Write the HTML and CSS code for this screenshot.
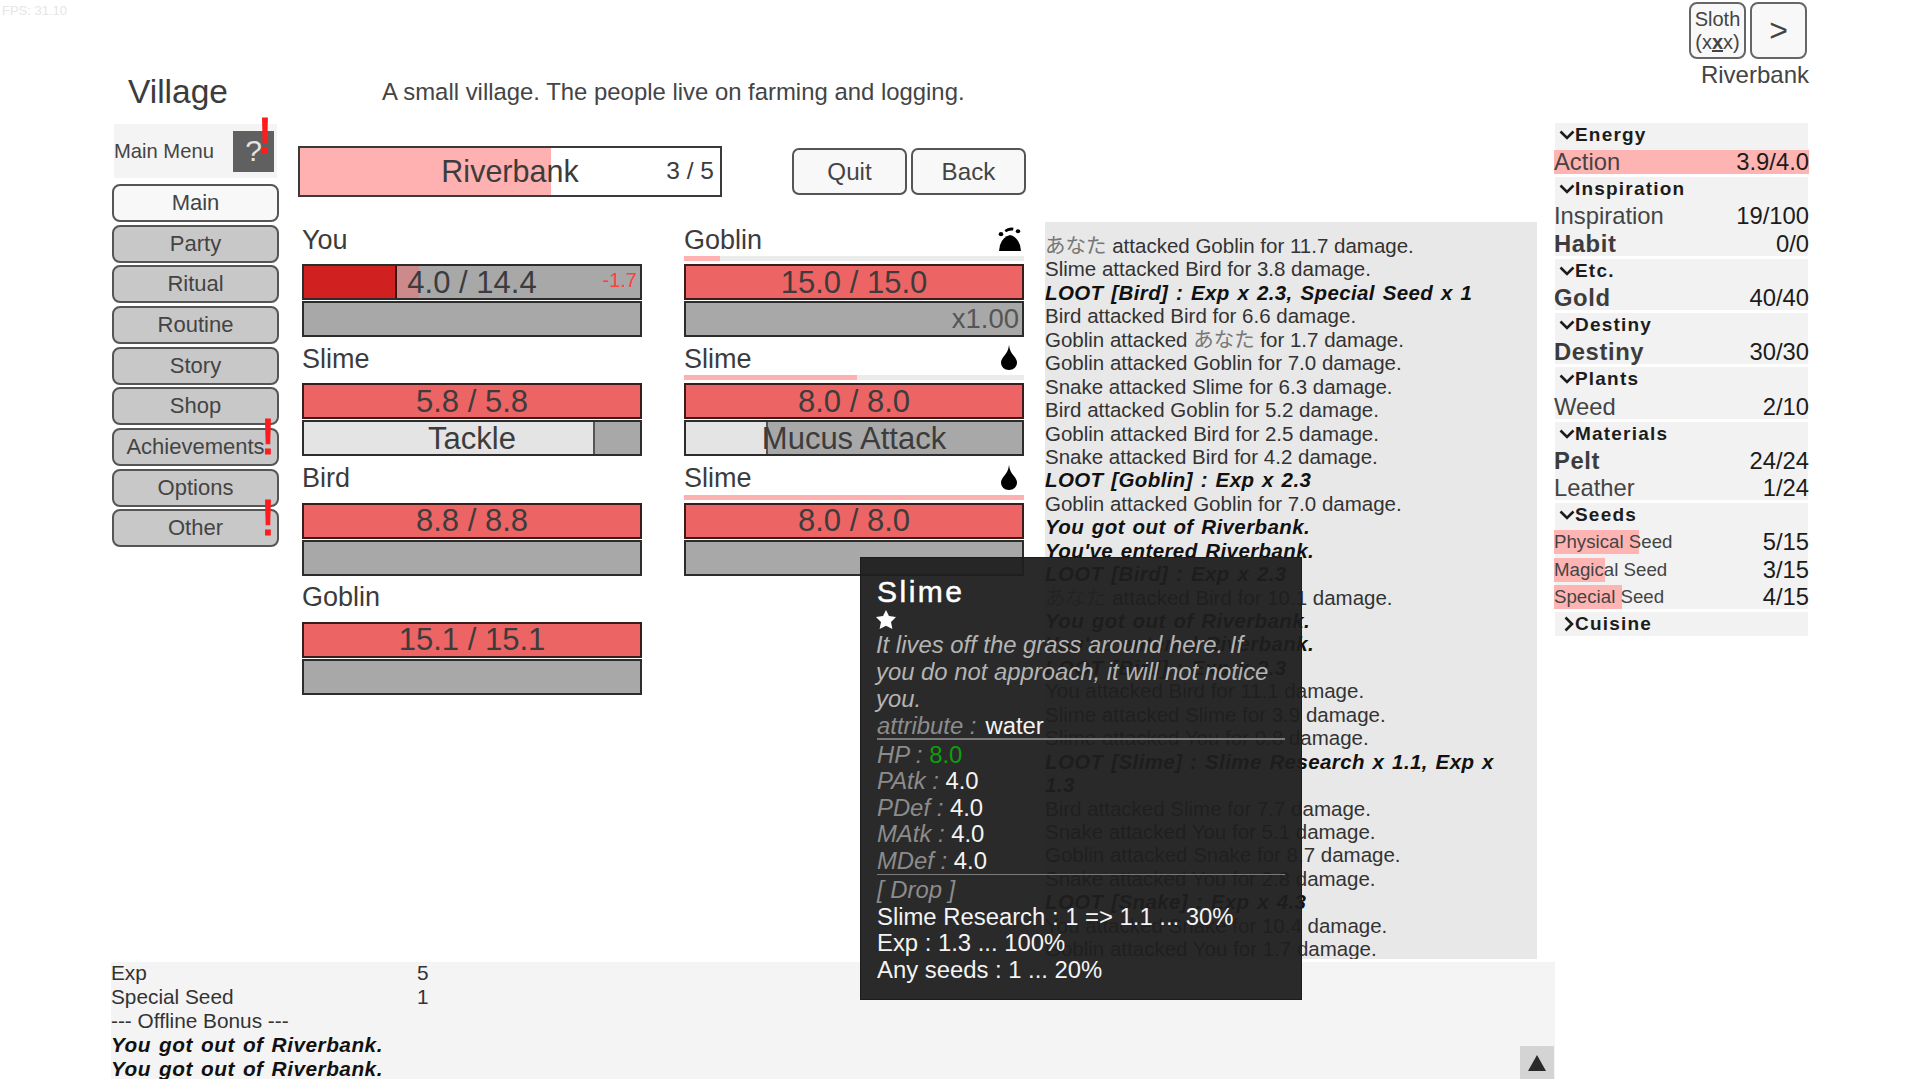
FILE: index.html
```html
<!DOCTYPE html>
<html lang="en">
<head>
<meta charset="utf-8">
<title>Village</title>
<link rel="stylesheet" href="styles.css">
</head>
<body>
<div class="fps">FPS: 31.10</div>
<div class="page">
  <div class="main">
    <header class="head">
      <h1 class="town">Village</h1>
      <p class="desc">A small village. The people live on farming and logging.</p>
    </header>
    <div class="content">
      <nav class="nav">
        <div class="menu-head"><span>Main Menu</span><span class="help">?<b class="alert">!</b></span></div>
        <button class="btn active">Main</button>
        <button class="btn">Party</button>
        <button class="btn">Ritual</button>
        <button class="btn">Routine</button>
        <button class="btn">Story</button>
        <button class="btn">Shop</button>
        <button class="btn">Achievements<b class="alert">!</b></button>
        <button class="btn">Options</button>
        <button class="btn">Other<b class="alert">!</b></button>
      </nav>
      <section class="center">
        <div class="dungeon">
          <div class="dbar"><i class="dfill"></i><span class="dname">Riverbank</span><span class="dcount">3 / 5</span></div>
          <button class="act first">Quit</button>
          <button class="act">Back</button>
        </div>
        <div class="battle">
          <div class="team">
            <div class="unit">
              <div class="uname"><span>You</span></div>
              <div class="prog none"></div>
              <div class="bar hp-lost"><i class="ghost" style="width:115px"></i><i class="hurt" style="width:93px"></i><span class="val">4.0 / 14.4</span><span class="dmg">-1.7</span></div>
              <div class="bar"></div>
            </div>
            <div class="unit">
              <div class="uname"><span>Slime</span></div>
              <div class="prog none"></div>
              <div class="bar hp"><span class="val">5.8 / 5.8</span></div>
              <div class="bar"><i class="skill" style="width:291px"></i><span class="val">Tackle</span></div>
            </div>
            <div class="unit">
              <div class="uname"><span>Bird</span></div>
              <div class="prog none"></div>
              <div class="bar hp"><span class="val">8.8 / 8.8</span></div>
              <div class="bar"></div>
            </div>
            <div class="unit">
              <div class="uname"><span>Goblin</span></div>
              <div class="prog none"></div>
              <div class="bar hp"><span class="val">15.1 / 15.1</span></div>
              <div class="bar"></div>
            </div>
          </div>
          <div class="team">
            <div class="unit">
              <div class="uname"><span>Goblin</span>
                <svg class="ico-goblin" viewBox="0 0 24 24"><path d="M1 24 L2 18 Q5 9.5 12 8 Q19 9.5 22 18 L23 24 Z"/><path d="M6.5 3 Q11 -0.5 15.5 0.8 L15 3.6 Q11 3 8 5.2 Z"/><ellipse cx="3" cy="7.2" rx="2.3" ry="2.1"/><ellipse cx="20" cy="4.2" rx="2.2" ry="2"/></svg>
              </div>
              <div class="prog"><i style="width:36px"></i></div>
              <div class="bar hp"><span class="val">15.0 / 15.0</span></div>
              <div class="bar"><span class="mult">x1.00</span></div>
            </div>
            <div class="unit">
              <div class="uname"><span>Slime</span>
                <svg class="ico-drop" viewBox="0 0 16 25"><path d="M8 0 C8.6 5 10 7.5 12.5 10.5 C15 13.5 16 15.5 16 17.5 C16 22 12.4 25 8 25 C3.6 25 0 22 0 17.5 C0 15.5 1 13.5 3.5 10.5 C6 7.5 7.4 5 8 0 Z"/></svg>
              </div>
              <div class="prog"><i style="width:173px"></i></div>
              <div class="bar hp"><span class="val">8.0 / 8.0</span></div>
              <div class="bar"><i class="skill" style="width:82px"></i><span class="val">Mucus Attack</span></div>
            </div>
            <div class="unit">
              <div class="uname"><span>Slime</span>
                <svg class="ico-drop" viewBox="0 0 16 25"><path d="M8 0 C8.6 5 10 7.5 12.5 10.5 C15 13.5 16 15.5 16 17.5 C16 22 12.4 25 8 25 C3.6 25 0 22 0 17.5 C0 15.5 1 13.5 3.5 10.5 C6 7.5 7.4 5 8 0 Z"/></svg>
              </div>
              <div class="prog"><i style="width:100%"></i></div>
              <div class="bar hp"><span class="val">8.0 / 8.0</span></div>
              <div class="bar"></div>
            </div>
          </div>
        </div>
      </section>
      <section class="log">
        <p><span class="jp">あなた</span> attacked Goblin for 11.7 damage.</p>
        <p>Slime attacked Bird for 3.8 damage.</p>
        <p class="em">LOOT [Bird] : Exp x 2.3, Special Seed x 1</p>
        <p>Bird attacked Bird for 6.6 damage.</p>
        <p>Goblin attacked <span class="jp">あなた</span> for 1.7 damage.</p>
        <p>Goblin attacked Goblin for 7.0 damage.</p>
        <p>Snake attacked Slime for 6.3 damage.</p>
        <p>Bird attacked Goblin for 5.2 damage.</p>
        <p>Goblin attacked Bird for 2.5 damage.</p>
        <p>Snake attacked Bird for 4.2 damage.</p>
        <p class="em">LOOT [Goblin] : Exp x 2.3</p>
        <p>Goblin attacked Goblin for 7.0 damage.</p>
        <p class="em">You got out of Riverbank.</p>
        <p class="em">You've entered Riverbank.</p>
        <p class="em">LOOT [Bird] : Exp x 2.3</p>
        <p><span class="jp">あなた</span> attacked Bird for 10.1 damage.</p>
        <p class="em">You got out of Riverbank.</p>
        <p class="em">You've entered Riverbank.</p>
        <p class="em">LOOT [Bird] : Exp x 2.3</p>
        <p>You attacked Bird for 11.1 damage.</p>
        <p>Slime attacked Slime for 3.9 damage.</p>
        <p>Slime attacked You for 0.8 damage.</p>
        <p class="em">LOOT [Slime] : Slime Research x 1.1, Exp x<br>1.3</p>
        <p>Bird attacked Slime for 7.7 damage.</p>
        <p>Snake attacked You for 5.1 damage.</p>
        <p>Goblin attacked Snake for 8.7 damage.</p>
        <p>Snake attacked You for 2.8 damage.</p>
        <p class="em">LOOT [Snake] : Exp x 4.3</p>
        <p>You attacked Snake for 10.4 damage.</p>
        <p>Goblin attacked You for 1.7 damage.</p>
      </section>
    </div>
    <footer class="bottom">
      <div class="line"><span class="k">Exp</span><span>5</span></div>
      <div class="line"><span class="k">Special Seed</span><span>1</span></div>
      <div class="line">--- Offline Bonus ---</div>
      <div class="line em wide">You got out of Riverbank.</div>
      <div class="line em wide">You got out of Riverbank.</div>
      <button class="up"><svg viewBox="0 0 18 16"><path d="M9 0 L18 16 H0 Z"/></svg></button>
    </footer>
  </div>
  <aside class="side">
    <div class="speed">
      <button class="sq small"><span>Sloth<br>(x<u>x</u>x)</span></button>
      <button class="sq big">&gt;</button>
    </div>
    <div class="place">Riverbank</div>
    <div class="res">
      <div class="group">
        <div class="gh"><svg class="chev" viewBox="0 0 16 10"><path d="M1.5 1.5 L8 8 L14.5 1.5"/></svg>Energy</div>
        <div class="row"><i class="rfill" style="width:100%"></i><span>Action</span><span class="v">3.9/4.0</span></div>
      </div>
      <div class="group">
        <div class="gh"><svg class="chev" viewBox="0 0 16 10"><path d="M1.5 1.5 L8 8 L14.5 1.5"/></svg>Inspiration</div>
        <div class="row"><span>Inspiration</span><span class="v">19/100</span></div>
        <div class="row"><span class="hv">Habit</span><span class="v">0/0</span></div>
      </div>
      <div class="group">
        <div class="gh"><svg class="chev" viewBox="0 0 16 10"><path d="M1.5 1.5 L8 8 L14.5 1.5"/></svg>Etc.</div>
        <div class="row"><span class="hv">Gold</span><span class="v">40/40</span></div>
      </div>
      <div class="group">
        <div class="gh"><svg class="chev" viewBox="0 0 16 10"><path d="M1.5 1.5 L8 8 L14.5 1.5"/></svg>Destiny</div>
        <div class="row"><span class="hv">Destiny</span><span class="v">30/30</span></div>
      </div>
      <div class="group">
        <div class="gh"><svg class="chev" viewBox="0 0 16 10"><path d="M1.5 1.5 L8 8 L14.5 1.5"/></svg>Plants</div>
        <div class="row"><span>Weed</span><span class="v">2/10</span></div>
      </div>
      <div class="group">
        <div class="gh"><svg class="chev" viewBox="0 0 16 10"><path d="M1.5 1.5 L8 8 L14.5 1.5"/></svg>Materials</div>
        <div class="row"><span class="hv">Pelt</span><span class="v">24/24</span></div>
        <div class="row"><span>Leather</span><span class="v">1/24</span></div>
      </div>
      <div class="group">
        <div class="gh"><svg class="chev" viewBox="0 0 16 10"><path d="M1.5 1.5 L8 8 L14.5 1.5"/></svg>Seeds</div>
        <div class="row seed"><i class="rfill" style="width:85px"></i><span>Physical Seed</span><span class="v">5/15</span></div>
        <div class="row seed"><i class="rfill" style="width:51px"></i><span>Magical Seed</span><span class="v">3/15</span></div>
        <div class="row seed"><i class="rfill" style="width:68px"></i><span>Special Seed</span><span class="v">4/15</span></div>
      </div>
      <div class="group">
        <div class="gh closed"><svg class="chev right" viewBox="0 0 10 16"><path d="M1.5 1.5 L8 8 L1.5 14.5"/></svg>Cuisine</div>
      </div>
    </div>
  </aside>
</div>
<div class="tip">
  <div class="tip-title">Slime</div>
  <svg class="star" viewBox="0 0 20 19"><path d="M10 0 L13 6 L20 7 L15 12 L16.4 19 L10 15.8 L3.6 19 L5 12 L0 7 L7 6 Z"/></svg>
  <p class="tip-desc">It lives off the grass around here. If you do not approach, it will not notice you.</p>
  <div class="tl attr"><em>attribute :</em><span class="aval">water</span></div>
  <div class="tl"><em>HP : </em><span class="green">8.0</span></div>
  <div class="tl"><em>PAtk : </em>4.0</div>
  <div class="tl"><em>PDef : </em>4.0</div>
  <div class="tl"><em>MAtk : </em>4.0</div>
  <div class="tl last"><em>MDef : </em>4.0</div>
  <div class="tl drop"><em>[ Drop ]</em></div>
  <div class="tl">Slime Research : 1 =&gt; 1.1 ... 30%</div>
  <div class="tl">Exp : 1.3 ... 100%</div>
  <div class="tl">Any seeds : 1 ... 20%</div>
</div>
</body>
</html>
```

FILE: styles.css
```css
* { box-sizing: border-box; }
html, body { margin: 0; padding: 0; width: 1920px; height: 1080px; overflow: hidden; background: #fff; }
body { font-family: "Liberation Sans", "Noto Sans CJK JP", sans-serif; color: #3c3c3c; position: relative; }
p, h1 { margin: 0; font-weight: normal; }
button { font-family: inherit; padding: 0; }
i { display: block; }

.fps { position: absolute; left: 2px; top: 3px; font-size: 13px; color: #e6e6e6; }

.page { display: flex; height: 1080px; }
.main { width: 1555px; padding-left: 111px; display: flex; flex-direction: column; }

.head { height: 124px; padding-top: 70.5px; display: flex; align-items: flex-start; }
.town { font-size: 33.5px; line-height: 42px; margin-left: 17px; width: 254px; color: #3c3c3c; }
.desc { font-size: 23.9px; line-height: 42px; color: #444; }

.content { display: flex; align-items: flex-start; margin-left: 1px; }
.nav { width: 167px; display: flex; flex-direction: column; gap: 2.67px; }
.menu-head { height: 54px; margin: 0 2px 3.33px; background: #f4f4f4; display: flex; align-items: center; justify-content: space-between; font-size: 20.2px; color: #444; padding-right: 3px; }
.help { width: 41px; height: 41px; background: #606060; color: #e4e4e4; font-size: 30px; display: flex; align-items: center; justify-content: center; position: relative; }
.btn { height: 38px; border: 2px solid #555; border-radius: 8px; background: #c8c8c8; color: #444; font-size: 22px; position: relative; }
.btn.active { background: #f8f8f8; }
.alert { position: absolute; right: 2px; top: -21px; font-size: 50px; line-height: 56px; font-weight: normal; color: #ff1c1c; -webkit-text-stroke: 1px #ff1c1c; }
.help .alert { right: 2px; top: -23px; }

.center { width: 728px; margin-left: 19px; padding-top: 22px; }
.dungeon { display: flex; align-items: center; height: 51px; gap: 4px; }
.dbar { width: 424px; height: 51px; border: 2px solid #3a3a3a; position: relative; display: flex; align-items: center; justify-content: center; overflow: hidden; }
.dfill { position: absolute; left: 0; top: 0; bottom: 0; width: 251px; background: #ffb0b0; }
.dname { position: relative; font-size: 30.5px; }
.dcount { position: absolute; right: 6px; font-size: 24.5px; top: 9px; }
.act { width: 115px; height: 47px; border: 2px solid #555; border-radius: 7px; background: #f8f8f8; color: #444; font-size: 24.2px; }
.act.first { margin-left: 66px; }

.battle { display: flex; gap: 42px; margin: 25px 0 0 4px; }
.team { width: 340px; display: flex; flex-direction: column; gap: 3.3px; }
.unit { display: flex; flex-direction: column; }
.uname { height: 34px; padding-top: 2px; display: flex; align-items: center; justify-content: space-between; font-size: 27px; position: relative; }
.prog { height: 5px; margin-bottom: 3px; background: #ebebeb; }
.prog i { height: 100%; background: #ffb0b0; }
.prog.none { background: transparent; }
.ico-goblin { width: 24px; height: 24px; margin-right: 2px; margin-top: -3px; }
.ico-drop { width: 16px; height: 25px; margin-right: 7px; margin-top: -3px; }

.bar { height: 36px; margin-bottom: 1px; border: 2px solid #2c2c2c; background: #a8a8a8; position: relative; display: flex; align-items: center; justify-content: center; overflow: hidden; }
.bar.hp { background: #ec6464; border-color: #3a1c1c; }
.val { position: relative; font-size: 31px; line-height: 32px; padding-top: 1px; }
.ghost { position: absolute; left: 0; top: 0; bottom: 0; background: #cc8a8a; }
.hurt { position: absolute; left: 0; top: 0; bottom: 0; background: #d02020; border-right: 2px solid #3a1010; }
.dmg { position: absolute; right: 3px; top: 3px; font-size: 20px; color: #ff4040; }
.mult { position: absolute; right: 3px; font-size: 27.5px; color: #555; }
.skill { position: absolute; left: 0; top: 0; bottom: 0; background: #e4e4e4; border-right: 2px solid #555; }

.log { width: 492px; height: 737px; margin-left: 19px; margin-top: 98px; padding-top: 12px; background: #e8e8e8; font-size: 20.5px; line-height: 23.44px; color: #333; overflow: hidden; }
.jp { color: #777; }
.em { font-weight: bold; font-style: italic; letter-spacing: 0.4px; word-spacing: 1.6px; color: #111; }
.wide { letter-spacing: 0.5px; word-spacing: 1.8px; }

.bottom { margin-top: auto; height: 117px; background: #f4f4f4; position: relative; font-size: 20.8px; color: #333; overflow: hidden; margin-bottom: 1px; }
.line { display: flex; height: 23.9px; line-height: 22px; white-space: pre; }
.k { width: 306px; }
.up { position: absolute; right: 1px; bottom: 0; width: 34px; height: 33px; border: 0; background: #d4d4d4; display: flex; align-items: center; justify-content: center; }
.up svg { width: 18px; height: 16px; fill: #2a2a2a; }

.side { width: 253px; display: flex; flex-direction: column; align-items: stretch; }
.speed { display: flex; justify-content: flex-end; gap: 4px; padding-top: 2px; margin-right: 1px; }
.sq { width: 57px; height: 57px; border: 2px solid #666; border-radius: 8px; background: #f8f8f8; color: #444; }
.small { font-size: 20px; line-height: 23px; }
.small u { font-weight: bold; }
.big { font-size: 32px; }
.place { text-align: right; font-size: 24px; line-height: 30px; margin: 1px -1px 0 0; color: #444; }
.res { margin-top: 33px; }

.group { background: #f2f2f2; margin-bottom: 3.17px; display: flex; flex-direction: column; gap: 3.17px; }
.gh { height: 24px; display: flex; align-items: center; font-size: 19px; font-weight: bold; letter-spacing: 1.2px; color: #1c1c1c; padding-left: 4px; }
.chev { width: 16px; height: 10px; fill: none; stroke: #1c1c1c; stroke-width: 2.6px; margin-right: 0; }
.chev.right { width: 10px; height: 16px; margin-left: 5px; margin-right: 1px; }
.row { height: 24px; margin: 0 -1px; position: relative; display: flex; justify-content: space-between; align-items: center; font-size: 23.8px; color: #444; }
.row span { position: relative; }
.v { color: #1c1c1c; }
.hv { font-weight: bold; letter-spacing: 0.6px; color: #3c3c3c; }
.seed { font-size: 18.7px; }
.seed .v { font-size: 23.8px; }
.rfill { position: absolute; left: 0; top: 0; bottom: 0; background: #ffb4b4; }

.tip { position: absolute; left: 860px; top: 557px; width: 442px; height: 443px; padding: 19px 16px 0 16px; background: rgba(31, 31, 31, 0.95); border: 1px solid #1c1c1c; color: #f4f4f4; font-size: 23.85px; line-height: 26.6px; }
.tip-title { font-size: 30px; line-height: 30px; letter-spacing: 2.5px; color: #fff; -webkit-text-stroke: 0.5px #fff; }
.star { display: block; width: 20px; height: 19px; fill: #fff; margin-top: 3px; margin-bottom: 2px; margin-left: -1px; }
.tip em { color: #8c8c8c; font-style: italic; }
.tip-desc { font-style: italic; color: #b4b4b4; line-height: 27.2px; margin-left: -1px; }
.tl { white-space: nowrap; }
.attr { border-bottom: 2px solid #7a7a7a; margin-bottom: 2px; height: 27px; line-height: 26.6px; }
.aval { margin-left: 9px; }
.last { border-bottom: 1px solid #7a7a7a; height: 27px; line-height: 25px; }
.green { color: #0ba00b; }
.drop { line-height: 26.6px; margin-top: 2px; }
```
